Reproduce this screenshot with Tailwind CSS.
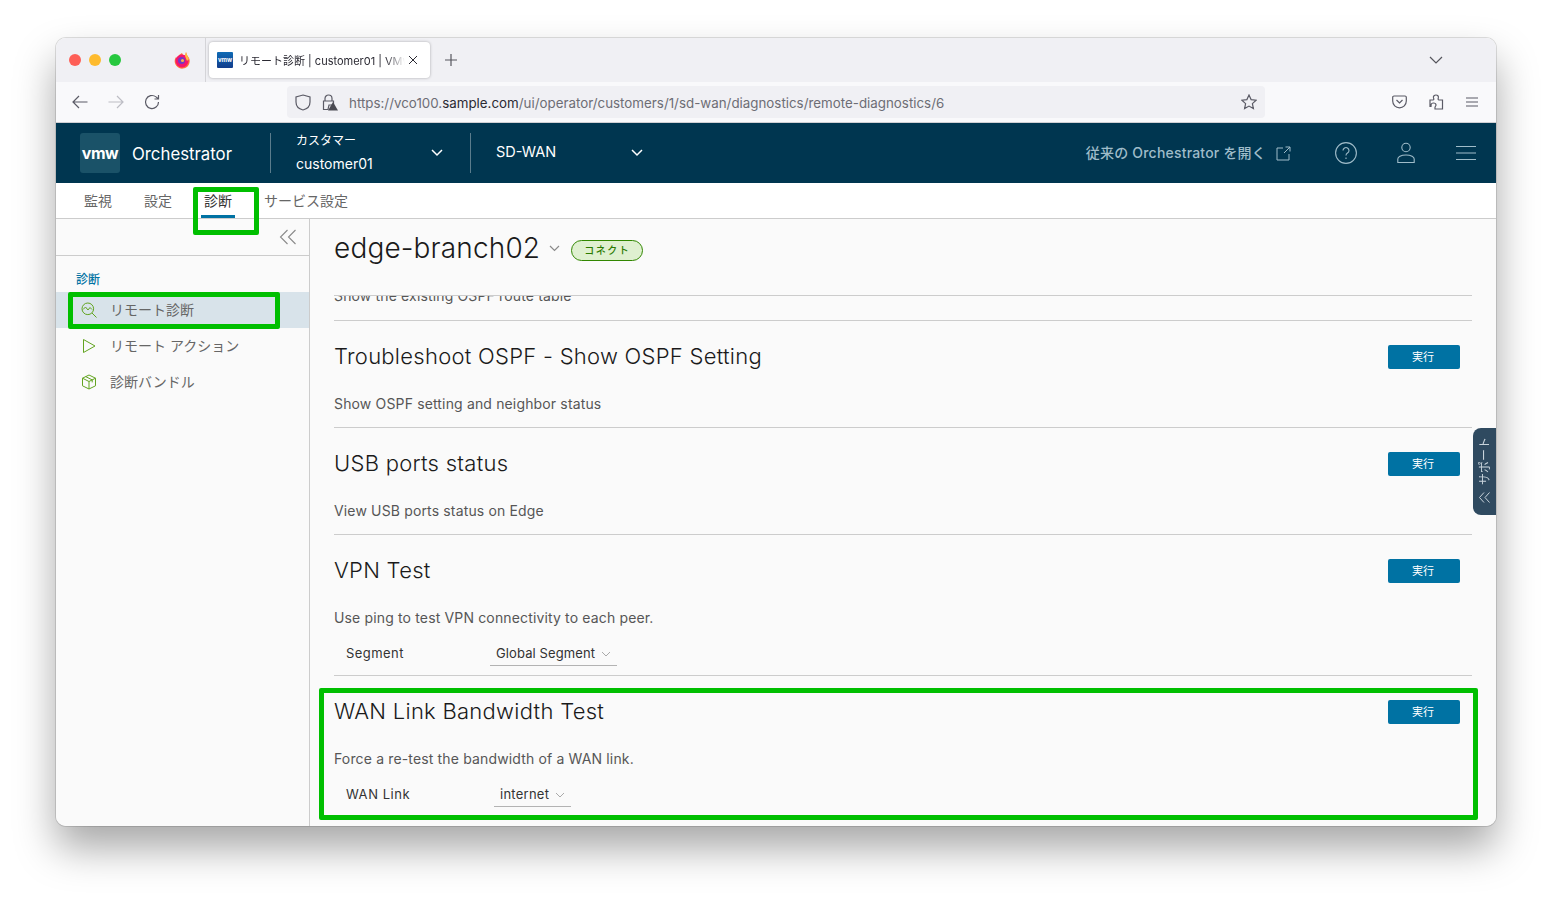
<!DOCTYPE html>
<html lang="ja">
<head>
  <meta charset="UTF-8" />
  <title>リモート診断 | customer01 | VMware</title>
  <script src="https://cdn.jsdelivr.net/npm/@tailwindcss/browser@4"></script>
</head>
<body class="bg-white h-[900px] overflow-hidden pt-[38px] pl-[56px] font-['Inter','Noto_Sans_CJK_JP',sans-serif]">
  <div class="relative w-[1440px] h-[788px] rounded-[10px] overflow-hidden bg-[#fafafa] flex flex-col">

    <!-- browser tabs -->
    <div class="h-[44px] bg-[#f0f0f4] flex items-center shrink-0">
      <div class="flex gap-[8px] pl-[13px] w-[108px]">
        <span class="w-[12px] h-[12px] rounded-full bg-[#fe5f57]"></span>
        <span class="w-[12px] h-[12px] rounded-full bg-[#febb2e]"></span>
        <span class="w-[12px] h-[12px] rounded-full bg-[#27c83f]"></span>
      </div>
      <svg class="w-[16px] h-[18px] ml-[10px]" viewBox="0 0 16 18">
        <path d="M12 1l1 3 2 3a7.500 7.500 0 1 1-14 1l1-2 1 1 2-3 3-2 1 2 2 1z" fill="#ff7139"/>
        <circle cx="8" cy="10" r="6.500" fill="#f5156c"/>
        <path d="M12 1l1 3 2 4-2 2-2-5z" fill="#ffbd3f"/>
        <circle cx="7.500" cy="9.500" r="3.500" fill="#6f3cc4"/>
        <circle cx="8.500" cy="9.500" r="1.500" fill="#ffb13f"/>
      </svg>
      <div class="w-px h-[44px] bg-[#d4d4d8] ml-[15px]"></div>
      <div class="ml-[3px] w-[221px] h-[36px] bg-white rounded-[4px] shadow-[0_0_3px_rgba(0,0,0,0.3)] flex items-center pl-[8px]">
        <span class="w-[16px] h-[16px] rounded-[1px] bg-gradient-to-b from-[#0f6bb5] to-[#123c8c] text-white text-[6px] font-bold leading-[16px] text-center">vmw</span>
        <span class="ml-[6px] mt-[2px] w-[166px] overflow-hidden whitespace-nowrap text-[11px] text-[#2b2a33] [mask-image:linear-gradient(to_right,black_88%,transparent)]">リモート診断 | customer01 | VMware</span>
        <svg class="w-[10px] h-[10px] ml-[3px]" viewBox="0 0 10 10" fill="none" stroke="#2b2a33" stroke-width="1"><path d="M1 1l8 8M9 1l-8 8"/></svg>
      </div>
      <svg class="w-[12px] h-[12px] ml-[15px]" viewBox="0 0 12 12" fill="none" stroke="#55555c" stroke-width="1.200"><path d="M6 0v12M0 6h12"/></svg>
      <svg class="w-[14px] h-[8px] ml-[972px]" viewBox="0 0 14 8" fill="none" stroke="#55555c" stroke-width="1.200"><path d="M1 1l6 6 6-6"/></svg>
    </div>

    <!-- browser toolbar -->
    <div class="h-[41px] bg-[#f9f9fb] border-b border-[#d0d0d4] flex items-center shrink-0">
      <svg class="w-[16px] h-[14px] ml-[16px]" viewBox="0 0 16 14" fill="none" stroke="#5b5b66" stroke-width="1.200"><path d="M15.500 7H1M7 1L1 7l6 6"/></svg>
      <svg class="w-[16px] h-[14px] ml-[20px]" viewBox="0 0 16 14" fill="none" stroke="#bdbdc4" stroke-width="1.200"><path d="M.5 7H15M9 1l6 6-6 6"/></svg>
      <svg class="w-[16px] h-[16px] ml-[20px]" viewBox="0 0 16 16" fill="none" stroke="#5b5b66" stroke-width="1.200"><path d="M14.500 8A6.500 6.500 0 1 1 12 2.900L14.500 5M14.500 1v4h-4"/></svg>
      <div class="ml-[127px] w-[978px] h-[32px] bg-[#f0f0f4] rounded-[4px] flex items-center">
        <svg class="w-[16px] h-[17px] ml-[8px]" viewBox="0 0 16 17" fill="none" stroke="#5b5b66" stroke-width="1.200"><path d="M8 1l7 2v5c0 4-3 7-7 8-4-1-7-4-7-8V3z"/></svg>
        <svg class="w-[16px] h-[17px] ml-[11px]" viewBox="0 0 16 17"><path d="M3 7V4.500a3.500 3.500 0 0 1 7 0V7M1.500 7h10v4H7l-1 4.500H1.500z" fill="none" stroke="#5b5b66" stroke-width="1.200"/><path d="M11 8l5 8.500H6z" fill="#4a4a52"/></svg>
        <span class="ml-[11px] mt-[2px] text-[13.35px] text-[#6d6d75] whitespace-nowrap">https://vco100.<span class="text-[#2b2a33]">sample.com</span>/ui/operator/customers/1/sd-wan/diagnostics/remote-diagnostics/6</span>
        <svg class="w-[16px] h-[16px] ml-auto mr-[8px]" viewBox="0 0 16 16" fill="none" stroke="#5b5b66" stroke-width="1.200"><path d="M8 1l2.100 4.600 5 .6-3.700 3.400 1 5L8 12.100 3.600 14.600l1-5L.9 6.200l5-.6z"/></svg>
      </div>
      <svg class="w-[15px] h-[14px] ml-[127px]" viewBox="0 0 15 14" fill="none" stroke="#5b5b66" stroke-width="1.200"><path d="M2 1h11a1.300 1.300 0 0 1 1.300 1.300V6a6.800 6.800 0 0 1-13.600 0V2.300A1.300 1.300 0 0 1 2 1zM4.500 5l3 3 3-3"/></svg>
      <svg class="w-[15px] h-[16px] ml-[22px]" viewBox="0 0 15 16" fill="none" stroke="#5b5b66" stroke-width="1.200"><path d="M1 6h3c1 0 1-1 .5-2C4 2 5.500 1 7 1s2.800 1 2.300 3c-.3 1-.3 2 .7 2h3.500v9H6v-1.500c0-1 1-1.500 1-2.500s-1-2-2.500-2S2 10 2 11c0 .7.5 1.500 0 1.500H1z"/></svg>
      <svg class="w-[12px] h-[10px] ml-[22px]" viewBox="0 0 12 10" fill="none" stroke="#5b5b66" stroke-width="1.200"><path d="M0 1h12M0 5h12M0 9h12"/></svg>
    </div>

    <!-- app header -->
    <div class="h-[60px] bg-[#003650] flex items-center shrink-0 text-white">
      <div class="w-[40px] h-[40px] ml-[24px] rounded-[3px] bg-[#1a5268] flex items-center justify-center text-[16px] font-bold tracking-[-0.5px]">vmw</div>
      <span class="ml-[12px] mt-[3px] text-[16.8px] w-[138px]">Orchestrator</span>
      <div class="w-px h-[40px] bg-[#5a7c8c]"></div>
      <div class="ml-[25px] w-[135px] flex flex-col gap-[5px] -mt-[2px]">
        <span class="text-[12px] leading-[18px]">カスタマー</span>
        <span class="text-[14px] leading-[18px]">customer01</span>
      </div>
      <svg class="w-[12px] h-[8px]" viewBox="0 0 12 8" fill="none" stroke="white" stroke-width="1.500"><path d="M1 1l5 5 5-5"/></svg>
      <div class="w-px h-[40px] bg-[#5a7c8c] ml-[27px]"></div>
      <span class="ml-[25px] -mt-[2px] text-[14.5px] w-[135px]">SD-WAN</span>
      <svg class="w-[12px] h-[8px]" viewBox="0 0 12 8" fill="none" stroke="white" stroke-width="1.500"><path d="M1 1l5 5 5-5"/></svg>
      <span class="ml-auto -mt-[2px] text-[14px] font-medium tracking-[0.2px] text-[#9fbcc9] whitespace-nowrap">従来の Orchestrator を開く</span>
      <svg class="w-[15px] h-[15px] ml-[10px]" viewBox="0 0 15 15" fill="none" stroke="#9fbcc9" stroke-width="1"><path d="M7 2H1v12h12V8M8 7l6-6M9.500 1H14v4.500"/></svg>
      <svg class="w-[22px] h-[22px] ml-[44px]" viewBox="0 0 22 22" fill="none" stroke="#9fbcc9" stroke-width="1.100"><circle cx="11" cy="11" r="10.400"/><path d="M8 8.500a3 3 0 1 1 4.500 2.600c-1 .6-1.500 1-1.500 2.400M11 15.500v1.500"/></svg>
      <svg class="w-[18px] h-[22px] ml-[40px]" viewBox="0 0 18 22" fill="none" stroke="#9fbcc9" stroke-width="1.100"><circle cx="9" cy="5.500" r="4.200"/><path d="M.8 20.500V17c0-2 3-4 8.200-4s8.200 2 8.200 4v3.500z"/></svg>
      <svg class="w-[20px] h-[14px] ml-[41px] mr-[20px]" viewBox="0 0 20 14" fill="none" stroke="#9fbcc9" stroke-width="1.100"><path d="M0 .5h20M0 7h20M0 13.500h20"/></svg>
    </div>

    <!-- app nav -->
    <div class="h-[36px] bg-white border-b border-[#ccc] flex gap-[32px] pl-[28px] text-[14px] text-[#666] shrink-0">
      <span class="leading-[36px]">監視</span>
      <span class="leading-[36px]">設定</span>
      <span class="leading-[36px] text-[#333] relative">診断<span class="absolute left-[-3px] right-[-3px] bottom-[0px] h-[3px] bg-[#0072a3]"></span></span>
      <span class="leading-[36px]">サービス設定</span>
    </div>

    <div class="flex flex-1 min-h-0">
      <!-- sidebar -->
      <div class="w-[254px] border-r border-[#ccc] shrink-0">
        <div class="h-[37px] border-b border-[#ccc] flex items-center justify-end pr-[12px]">
          <svg class="w-[18px] h-[16px]" viewBox="0 0 18 16" fill="none" stroke="#8a8a8a" stroke-width="1.100"><path d="M8.500 1L1.500 8l7 7M16.500 1l-7 7 7 7"/></svg>
        </div>
        <div class="pl-[20px] pt-[15px] h-[36px] text-[12px] leading-[18px] font-medium text-[#0072a3]">診断</div>
        <div class="h-[36px] bg-[#d8e3ea] flex items-center pl-[25px] pb-[2px] text-[14px] text-[#666]">
          <svg class="w-[16px] h-[16px] mr-[13px] mt-[2px]" viewBox="0 0 16 16" fill="none" stroke="#62a420" stroke-width="1"><circle cx="6.800" cy="6.800" r="5.800"/><path d="M11 11l4.500 4.500M2 7.500l2.500-2.500 2.500 3 2-2.500 2 2"/></svg>
          リモート診断
        </div>
        <div class="h-[36px] flex items-center pl-[25px] pb-[2px] text-[14px] text-[#666]">
          <svg class="w-[16px] h-[16px] mr-[13px] mt-[2px]" viewBox="0 0 16 16" fill="none" stroke="#62a420" stroke-width="1"><path d="M2.500 1.500l11.500 6.500-11.500 6.500z"/></svg>
          リモート アクション
        </div>
        <div class="h-[36px] flex items-center pl-[25px] pb-[2px] text-[14px] text-[#666]">
          <svg class="w-[16px] h-[16px] mr-[13px] mt-[2px]" viewBox="0 0 16 16" fill="none" stroke="#62a420" stroke-width="1"><path d="M8 1l6.500 3.200v7.600L8 15l-6.500-3.200V4.200zM1.500 4.200L8 7.500l6.500-3.300M8 7.500V15M4.700 2.600l6.500 3.300v2.500"/></svg>
          診断バンドル
        </div>
      </div>

      <!-- main -->
      <div class="flex-1 min-w-0 pl-[24px] pr-[24px] flex flex-col">
        <div class="h-[77px] border-b border-[#ccc] flex items-start pt-[12px] shrink-0">
          <h1 class="text-[28px] leading-[34px] font-light tracking-[0.15px] text-[#1a1a1a]">edge-branch02</h1>
          <svg class="w-[11px] h-[7px] ml-[9px] mt-[14px]" viewBox="0 0 11 7" fill="none" stroke="#8a8a8a" stroke-width="1.200"><path d="M1 1l4.500 4.500L10 1"/></svg>
          <span class="ml-[11px] mt-[9px] w-[72px] h-[21px] rounded-full border border-[#318700] bg-[#dff0d0] text-[#2b7a00] text-[10px] font-medium leading-[18px] text-center tracking-[1.5px]">コネクト</span>
        </div>
        <div class="h-[25px] overflow-hidden border-b border-[#ccc] shrink-0">
          <p class="text-[14px] leading-[20px] tracking-[0.15px] text-[#565656] -mt-[10px]">Show the existing OSPF route table</p>
        </div>

        <div class="h-[107px] border-b border-[#ccc] pt-[24px] shrink-0">
          <div class="h-[24px] flex items-center justify-between">
            <h2 class="text-[22px] font-light tracking-[0.27px] -mt-[2px] text-[#1a1a1a]">Troubleshoot OSPF - Show OSPF Setting</h2>
            <button class="w-[72px] h-[24px] mr-[12px] pr-[2px] bg-[#0072a3] rounded-[2px] text-white text-[11px]">実行</button>
          </div>
          <p class="mt-[25px] text-[14px] leading-[20px] tracking-[0.15px] text-[#565656]">Show OSPF setting and neighbor status</p>
        </div>

        <div class="h-[107px] border-b border-[#ccc] pt-[24px] shrink-0">
          <div class="h-[24px] flex items-center justify-between">
            <h2 class="text-[22px] font-light tracking-[0.27px] -mt-[2px] text-[#1a1a1a]">USB ports status</h2>
            <button class="w-[72px] h-[24px] mr-[12px] pr-[2px] bg-[#0072a3] rounded-[2px] text-white text-[11px]">実行</button>
          </div>
          <p class="mt-[25px] text-[14px] leading-[20px] tracking-[0.15px] text-[#565656]">View USB ports status on Edge</p>
        </div>

        <div class="h-[141px] border-b border-[#ccc] pt-[24px] shrink-0">
          <div class="h-[24px] flex items-center justify-between">
            <h2 class="text-[22px] font-light tracking-[0.27px] -mt-[2px] text-[#1a1a1a]">VPN Test</h2>
            <button class="w-[72px] h-[24px] mr-[12px] pr-[2px] bg-[#0072a3] rounded-[2px] text-white text-[11px]">実行</button>
          </div>
          <p class="mt-[25px] text-[14px] leading-[20px] tracking-[0.15px] text-[#565656]">Use ping to test VPN connectivity to each peer.</p>
          <div class="mt-[14px] flex items-center text-[13px] text-[#333]">
            <span class="w-[156px] pl-[12px] tracking-[0.45px]">Segment</span>
            <div class="h-[24px] w-[127px] border-b border-[#b3b3b3] flex items-center pl-[6px] tracking-[0.1px]">Global Segment
              <svg class="w-[10px] h-[6px] ml-[6px]" viewBox="0 0 10 6" fill="none" stroke="#aaa" stroke-width="1"><path d="M1 1l4 4 4-4"/></svg>
            </div>
          </div>
        </div>

        <div class="pt-[24px] shrink-0">
          <div class="h-[24px] flex items-center justify-between">
            <h2 class="text-[22px] font-light tracking-[0.27px] -mt-[2px] text-[#1a1a1a]">WAN Link Bandwidth Test</h2>
            <button class="w-[72px] h-[24px] mr-[12px] pr-[2px] bg-[#0072a3] rounded-[2px] text-white text-[11px]">実行</button>
          </div>
          <p class="mt-[25px] text-[14px] leading-[20px] tracking-[0.15px] text-[#565656]">Force a re-test the bandwidth of a WAN link.</p>
          <div class="mt-[14px] flex items-center text-[13px] text-[#333]">
            <span class="w-[160px] pl-[12px] tracking-[0.55px]">WAN Link</span>
            <div class="h-[24px] w-[77px] border-b border-[#b3b3b3] flex items-center pl-[6px] tracking-[0.25px]">internet
              <svg class="w-[10px] h-[6px] ml-[6px]" viewBox="0 0 10 6" fill="none" stroke="#aaa" stroke-width="1"><path d="M1 1l4 4 4-4"/></svg>
            </div>
          </div>
        </div>
      </div>
    </div>

    <!-- support tab, over the content -->
    <div class="absolute left-[1417px] top-[390px] w-[23px] h-[87px] bg-[#2f4a60] rounded-l-[8px] flex flex-col items-center pt-[9px] text-[#c8d3db]">
      <span class="text-[12px] leading-[23px] [writing-mode:vertical-rl] [text-orientation:sideways] rotate-180">サポート</span>
      <svg class="w-[11px] h-[11px] mt-[7px]" viewBox="0 0 11 11" fill="none" stroke="#c8d3db" stroke-width="1"><path d="M5 .5l-4.500 5 4.500 5M10.500 .5L6 5.500l4.500 5"/></svg>
    </div>

    <!-- green annotation boxes -->
    <div class="absolute left-[137px] top-[149px] w-[66px] h-[48px] border-[5px] border-[#00bf00] rounded-[2px]"></div>
    <div class="absolute left-[12px] top-[254px] w-[212px] h-[37px] border-[5px] border-[#00bf00] rounded-[2px]"></div>
    <div class="absolute left-[263px] top-[650px] w-[1159px] h-[132px] border-[5px] border-[#00bf00] rounded-[2px]"></div>
  </div>

  <!-- window shadow -->
  <div class="absolute left-[56px] top-[38px] w-[1440px] h-[788px] rounded-[10px] pointer-events-none shadow-[0_0_0_1px_rgba(0,0,0,0.12),0_22px_40px_rgba(0,0,0,0.35)] -z-10"></div>
</body>
</html>
